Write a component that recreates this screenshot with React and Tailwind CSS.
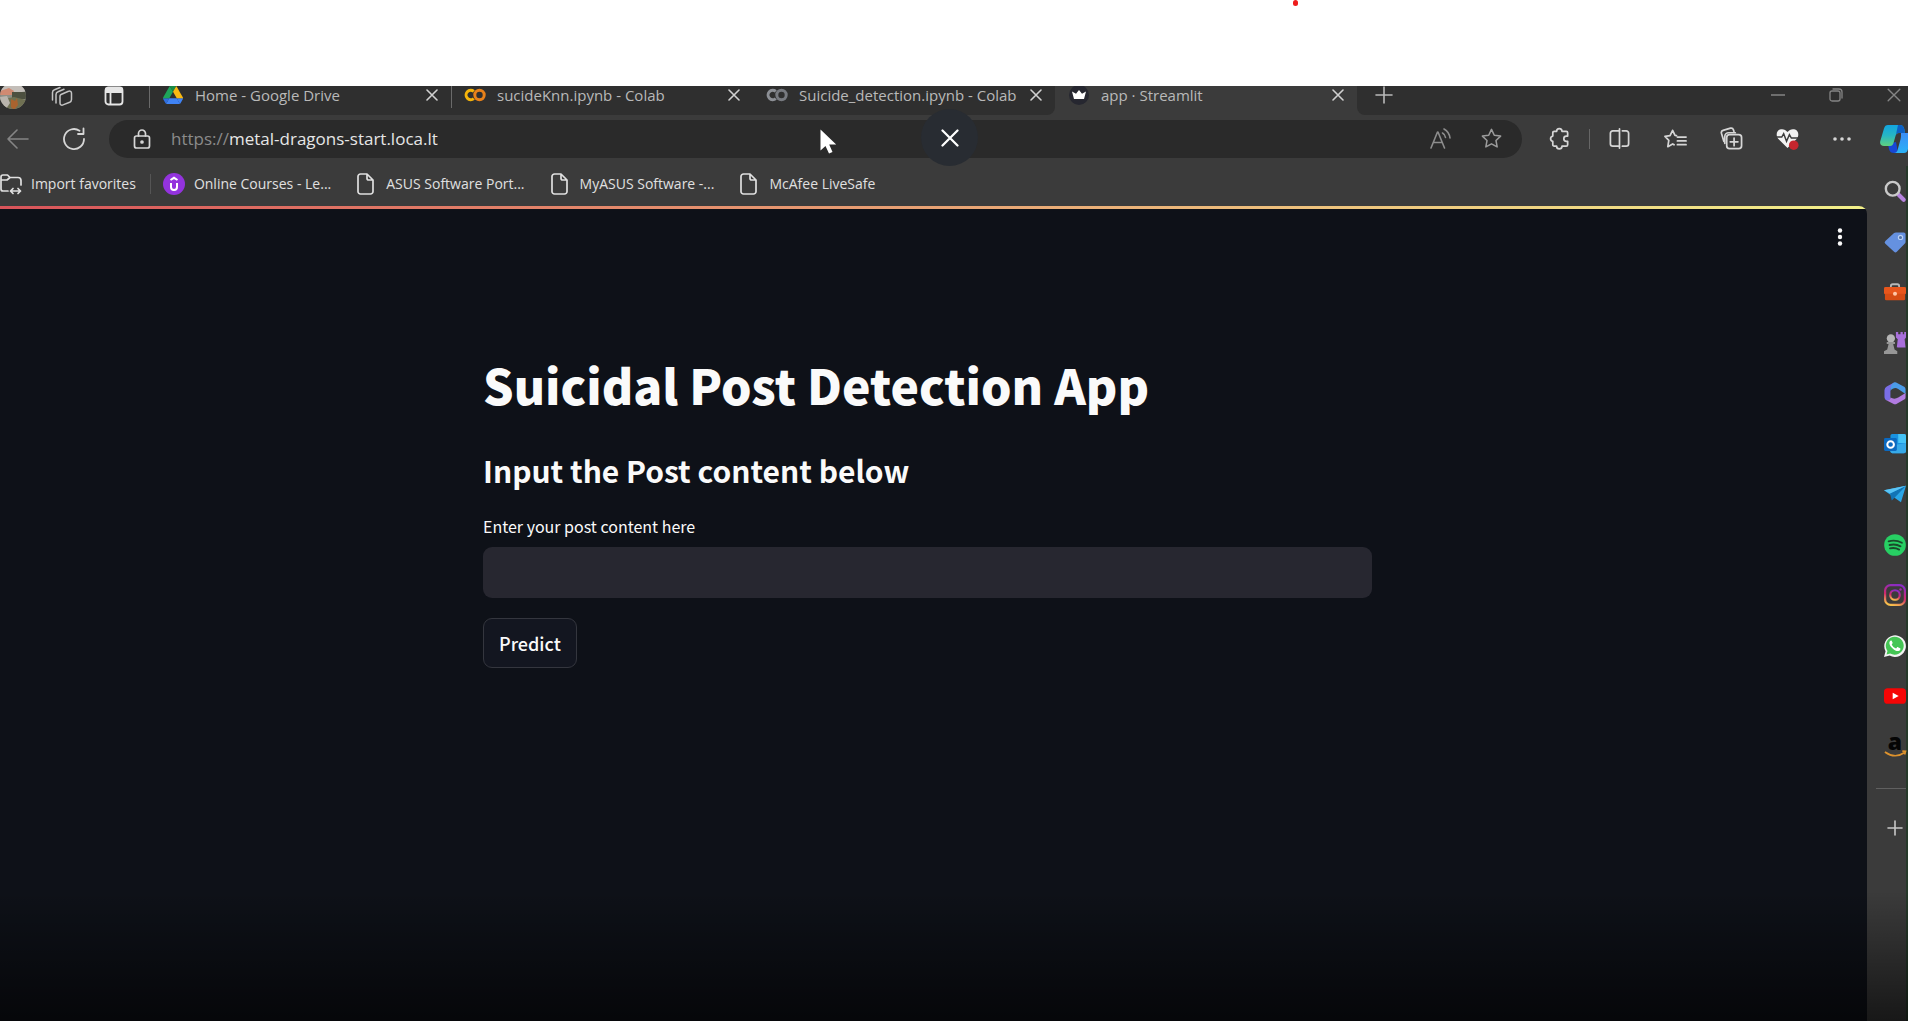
const Svg = ({ s = 22, vb = "0 0 24 24", children, className = "", sw = 1.6 }) => (
  <svg width={s} height={s} viewBox={vb} fill="none" stroke="currentColor" strokeWidth={sw} strokeLinecap="round" strokeLinejoin="round" className={"shrink-0 " + className} aria-hidden="true">
    {children}
  </svg>
);

const CloseIcon = ({ s = 12, sw = 1.6 }) => (
  <Svg s={s} vb="0 0 12 12" sw={sw}><path d="M1 1l10 10M11 1L1 11" /></Svg>
);

const Avatar = () => (
  <svg width="28" height="28" viewBox="0 0 28 28" className="shrink-0" aria-hidden="true">
    <defs><clipPath id="av"><circle cx="13" cy="14" r="13" /></clipPath></defs>
    <g clipPath="url(#av)">
      <rect width="28" height="28" fill="#8f8f86" />
      <path d="M0 0h28v9l-12 2L0 9z" fill="#c3beb9" />
      <path d="M0 9l9-3 5 3-2 4H0z" fill="#d08a72" />
      <path d="M12 10h14v7H12z" fill="#4d5040" />
      <path d="M4 17l10-2 12 3v10H3z" fill="#6f7052" />
      <path d="M0 15l7-1 3 7-4 6-6-2z" fill="#b9b4ad" />
      <path d="M11 17l4 2 2-3 1 7-4 5-3-3z" fill="#a9632f" />
    </g>
  </svg>
);

const Workspaces = () => (
  <Svg s={24} sw={1.5}>
    <path d="M2.5 16V8.500a3 3 0 0 1 2-2.800L10 3.500M6 19V10.500a3 3 0 0 1 2-2.800L14 5.200" />
    <path d="M11 10.500l7.500-3.200a2 2 0 0 1 3 1.900v6.300a3 3 0 0 1-1.800 2.700l-6.700 2.700a2 2 0 0 1-3-1.900v-6.500a2 2 0 0 1 1-2z" />
  </Svg>
);

const TabActions = () => (
  <Svg s={20} vb="0 0 20 20" sw={1.8}>
    <rect x="1.500" y="1.500" width="17" height="17" rx="3" />
    <path d="M2 2.500h16V6H2z" fill="currentColor" />
    <path d="M6.500 6v12" />
  </Svg>
);

const Drive = () => (
  <svg width="20" height="18" viewBox="0 0 87 78" className="shrink-0" aria-hidden="true">
    <path d="M6.600 66.850l3.850 6.650c.8 1.400 1.950 2.500 3.300 3.300L27.500 53H0c0 1.550.4 3.100 1.200 4.500z" fill="#2f6fe0" />
    <path d="M43.650 25L29.900 1.200c-1.350.8-2.500 1.900-3.300 3.300L1.200 48.500A9 9 0 0 0 0 53h27.500z" fill="#1ea55a" />
    <path d="M73.550 76.800c1.350-.8 2.500-1.900 3.300-3.300l9.250-16c.8-1.400 1.200-2.950 1.200-4.500H59.800l5.850 11.500z" fill="#3f83f5" />
    <path d="M43.650 25L57.400 1.200C56.050.4 54.500 0 52.900 0H34.400c-1.600 0-3.150.45-4.500 1.200z" fill="#188a45" />
    <path d="M59.800 53H27.500L13.750 76.800c1.350.8 2.900 1.200 4.500 1.200h50.800c1.600 0 3.150-.45 4.500-1.200z" fill="#3f83f5" />
    <path d="M73.400 26.500L60.700 4.500c-.8-1.400-1.950-2.500-3.300-3.300L43.650 25 59.800 53h27.450c0-1.550-.4-3.100-1.200-4.500z" fill="#f9b912" />
  </svg>
);

const Colab = ({ left, right }) => (
  <svg width="22" height="14" viewBox="0 0 22 14" fill="none" strokeWidth="3" className="shrink-0" aria-hidden="true">
    <path d="M9.800 10.600A4.700 4.700 0 1 1 9.800 3.400" stroke={left} />
    <circle cx="15.500" cy="7" r="4.700" stroke={right} />
  </svg>
);

const Crown = () => (
  <svg width="20" height="20" viewBox="0 0 20 20" className="shrink-0" aria-hidden="true">
    <circle cx="10" cy="10" r="10" fill="#262730" />
    <path d="M3 6.500l4 2.200 3-3.700 3 3.700 4-2.200-2 7.500H5z" fill="#fff" />
  </svg>
);

const tabs = [
  { title: "Home - Google Drive", icon: <Drive /> },
  { title: "sucideKnn.ipynb - Colab", icon: <Colab left="#f5b40a" right="#e8811a" /> },
  { title: "Suicide_detection.ipynb - Colab", icon: <Colab left="#8d9096" right="#777a80" /> },
  { title: "app · Streamlit", icon: <Crown />, active: true },
];

const TabStrip = () => (
  <div className="flex h-[29px] overflow-hidden bg-[#3b3b3b] text-[#b9b9b9]">
    <div className="flex w-[149px] shrink-0 items-center bg-[#2f2f2f] pb-[10px] text-[#c4c4c4]">
      <button aria-label="Profile"><Avatar /></button>
      <button aria-label="Workspaces" className="ml-[22px]"><Workspaces /></button>
      <button aria-label="Tab actions" className="ml-[30px] text-[#e6e6e6]"><TabActions /></button>
    </div>
    {tabs.map((t, i) => (
      <div key={t.title} className={"w-[302px] shrink-0 " + (t.active ? "bg-[#3b3b3b]" : i === 2 ? "rounded-br-lg bg-[#2f2f2f]" : "bg-[#2f2f2f]")}>
        <div className="flex h-[17px] items-center">
          <span className={"h-[26px] w-px shrink-0 " + (i === 0 || i === 1 ? "bg-[#6a6a6a]" : "bg-transparent")} />
          <span className="ml-3 flex w-[22px] shrink-0 justify-center">{t.icon}</span>
          <span className="ml-[11px] grow text-[15px] leading-4 whitespace-nowrap">{t.title}</span>
          <button aria-label={"Close " + t.title} className="mr-[13px] text-[#d0d0d0]"><CloseIcon /></button>
        </div>
      </div>
    ))}
    <div className="flex grow items-center rounded-bl-lg bg-[#2f2f2f] pb-3">
      <button aria-label="New tab" className="ml-[18px]"><Svg s={18} vb="0 0 18 18"><path d="M9 1v16M1 9h16" /></Svg></button>
      <div className="ml-auto flex items-center gap-[44px] pr-[7px] text-[#858585]">
        <button aria-label="Minimize"><Svg s={14} vb="0 0 14 14" sw={1.300}><path d="M0 7h14" /></Svg></button>
        <button aria-label="Restore"><Svg s={14} vb="0 0 14 14" sw={1.300}><rect x="1" y="3" width="10" height="10" rx="2" /><path d="M4 1h6a3 3 0 0 1 3 3v6" /></Svg></button>
        <button aria-label="Close window"><CloseIcon s={14} sw={1.200} /></button>
      </div>
    </div>
  </div>
);

const starPath = "M12 2.500l2.900 6.100 6.600.9-4.800 4.600 1.200 6.700-5.900-3.200-5.900 3.200 1.200-6.700L2.500 9.500l6.600-.9z";

const Copilot = () => (
  <svg width="28" height="28" viewBox="0 0 28 28" className="shrink-0" aria-hidden="true">
    <defs>
      <linearGradient id="cpA" x1="0" y1="0" x2="0" y2="1"><stop offset="0" stopColor="#12a5e0" /><stop offset=".5" stopColor="#27b6c4" /><stop offset="1" stopColor="#5fd07e" /></linearGradient>
      <linearGradient id="cpB" x1="0" y1="0" x2="0" y2="1"><stop offset="0" stopColor="#3c8df5" /><stop offset="1" stopColor="#2bb2f7" /></linearGradient>
    </defs>
    <path d="M8 19l8-2 2 11h-4c-3 0-4-1-5-4z" fill="#1747d6" />
    <path d="M8 0h12c3 0 4 2 4.500 5l.5 3h-6c-2 0-3 1-3.500 3l-2 7c-.6 2-1.500 3-3.500 3H4c-3 0-4.500-2-3.700-5L4 3.500C4.700 1 6 0 8 0z" fill="url(#cpA)" />
    <path d="M18 0h2c3 0 4 2 4.500 5l.5 3h-6c-1.500 0-2.300.6-3 1.600z" fill="#0d5fc4" />
    <path d="M21 8h6c3 0 4 2 4 5l-3 11c-.8 3-2 4-4 4H14c2 0 3-1 3.600-3l3-11c.5-2 .4-4 .4-6z" fill="url(#cpB)" />
  </svg>
);

const Toolbar = () => (
  <div className="flex h-[51px] items-center bg-[#3b3b3b] pb-1 text-[#d6d6d6]">
    <button aria-label="Back" className="ml-[7px] text-[#858585]"><Svg s={22} vb="0 0 22 22"><path d="M21 11H1M10 2l-9 9 9 9" /></Svg></button>
    <button aria-label="Refresh" className="ml-[33px]"><Svg s={24} sw={1.800}><path d="M22 12A10 10 0 1 1 17.500 3.700" /><path d="M21.500 1.500V7H16" /></Svg></button>
    <div className="ml-[23px] flex h-[38px] grow items-center rounded-full bg-[#2a2a2a] pr-[19px] pl-[23px]">
      <Svg s={20} vb="0 0 18 20" sw={1.700}><rect x="1.500" y="7" width="15" height="12" rx="2" /><path d="M5.500 7V4.500a3.500 3.500 0 0 1 7 0V7" /><circle cx="9" cy="13" r="1" fill="currentColor" /></Svg>
      <label className="relative ml-[19px] h-[24px] grow text-[17px] leading-[24px]">
        <span className="pointer-events-none absolute inset-0 whitespace-nowrap text-[#e6e6e6]"><span className="text-[#8b8b8b]">https://</span>metal-dragons-start.loca.lt</span>
        <input aria-label="Address" className="h-full w-full bg-transparent outline-none" />
      </label>
      <button aria-label="Read aloud" className="text-[#8d8d8d]"><Svg s={22} vb="0 0 22 22"><path d="M1 20L7.500 4h.5L14.500 20M3.500 14.500h8.500M12.500 5c1.800 1 2.700 2.500 3 4.500M14 1c3.500 2 5.500 5 6 9" /></Svg></button>
      <button aria-label="Add to favorites" className="ml-7 text-[#9b9b9b]"><Svg s={23}><path d={starPath} /></Svg></button>
    </div>
    <button aria-label="Extensions" className="ml-[26px]"><Svg s={23} sw={1.800}><path d="M9 4.500a2.800 2.800 0 0 1 5.600 0H19a1.500 1.500 0 0 1 1.500 1.500v3.500h-1.300a2.700 2.700 0 0 0 0 5.400h1.300v3.600A1.500 1.500 0 0 1 19 20h-4.400a2.800 2.800 0 0 1-5.600 0H6.500A1.500 1.500 0 0 1 5 18.500V15a2.800 2.800 0 0 1 0-5.500V6a1.500 1.500 0 0 1 1.500-1.500z" /></Svg></button>
    <span className="mx-[18px] h-[20px] w-px bg-[#666]" />
    <button aria-label="Split screen"><Svg s={23} sw={1.800}><path d="M9 4H5a2.500 2.500 0 0 0-2.500 2.500v11A2.500 2.500 0 0 0 5 20h4M15 4h4a2.500 2.500 0 0 1 2.500 2.500v11A2.500 2.500 0 0 1 19 20h-4M12 2v20M9 4h3M9 20h3" /></Svg></button>
    <button aria-label="Favorites" className="ml-[33px]"><Svg s={23} sw={1.800}><path d="M13 8l-1.500-.2L9 2.500 6.300 8l-5.300.8 4 4.100-1 6.600 5-2.800 1.500.9M14 9.500h9M14 13.500h9M14 17.500h9" transform="translate(0 1)" /></Svg></button>
    <button aria-label="Collections" className="ml-[33px]"><Svg s={23} sw={1.800}><rect x="7" y="8" width="15.500" height="14.500" rx="3" /><path d="M14.700 11.500v8M10.700 15.500h8M4 15L1.500 6.500a2.500 2.500 0 0 1 1.700-3L11 1.200a2.500 2.500 0 0 1 3 1.600l.5 1.700M5 17v-7a4 4 0 0 1 4-4h7" /></Svg></button>
    <button aria-label="Browser essentials" className="ml-[33px]">
      <svg width="23" height="23" viewBox="0 0 24 24" aria-hidden="true">
        <path d="M12 22L2.500 12.500C-.5 9 .5 4 4 2.700c3-1.200 6 0 8 2.600 2-2.600 5-3.800 8-2.600 3.500 1.300 4.500 6.300 1.500 9.800z" fill="#f2f2f2" />
        <path d="M1 10.500h5l2-3.500 3 8 3-7 2 3.500h7" fill="none" stroke="#3b3b3b" strokeWidth="1.500" />
        <circle cx="18.500" cy="19" r="5" fill="#c6262e" />
      </svg>
    </button>
    <button aria-label="Settings and more" className="ml-[34px]"><Svg s={18} vb="0 0 18 18"><g fill="currentColor" stroke="none"><circle cx="2" cy="9" r="1.800" /><circle cx="9" cy="9" r="1.800" /><circle cx="16" cy="9" r="1.800" /></g></Svg></button>
    <button aria-label="Copilot" className="ml-[29px]"><Copilot /></button>
  </div>
);

const FileIcon = () => (
  <Svg s={22} vb="0 0 22 22" sw={1.700}><path d="M5.500 1H12l6 6v11.500A2.500 2.500 0 0 1 15.500 21h-10A2.500 2.500 0 0 1 3 18.500v-15A2.500 2.500 0 0 1 5.500 1zM12 1v4.500A1.500 1.500 0 0 0 13.500 7H18" /></Svg>
);

const Bookmarks = () => (
  <nav aria-label="Favorites bar" className="flex h-[40px] items-center bg-[#3b3b3b] pb-[5px] text-[14px] leading-[20px] whitespace-nowrap text-[#e0e0e0]">
    <a href="#import" className="flex items-center gap-[9px]">
      <Svg s={22} vb="0 0 22 22" sw={1.700}><path d="M8 18H3a2 2 0 0 1-2-2V4a2 2 0 0 1 2-2h4.500L10 4.500h8a3 3 0 0 1 3 3V12M1 7h6l3-2.500M10.500 18h10M13 15.500L10.500 18l2.500 2.500M18 15.500l2.500 2.500-2.500 2.500" /></Svg>
      Import favorites
    </a>
    <span className="mr-3 ml-[14px] h-[20px] w-px bg-[#555]" />
    <a href="#courses" className="flex items-center gap-[9px]">
      <svg width="22" height="22" viewBox="0 0 22 22" aria-hidden="true"><circle cx="11" cy="11" r="11" fill="#9333dd" /><path d="M8 10v4a3 3 0 0 0 6 0v-4M7.500 7L11 4.800 14.500 7" fill="none" stroke="#fff" strokeWidth="2" /></svg>
      Online Courses - Le...
    </a>
    <a href="#asus" className="ml-6 flex items-center gap-[9px]"><FileIcon />ASUS Software Port...</a>
    <a href="#myasus" className="ml-6 flex items-center gap-[9px]"><FileIcon />MyASUS Software -...</a>
    <a href="#mcafee" className="ml-6 flex items-center gap-[9px]"><FileIcon />McAfee LiveSafe</a>
  </nav>
);

const Pic = ({ children }) => <svg width="22" height="22" viewBox="0 0 24 24" className="block overflow-visible" aria-hidden="true">{children}</svg>;

const sideItems = [
  ["Search", <Pic><path d="M16 16l5.500 5.500" stroke="#b583dd" strokeWidth="4.500" strokeLinecap="round" /><circle cx="9.500" cy="9.500" r="7.500" fill="none" stroke="#c9c9c9" strokeWidth="2.600" /></Pic>],
  ["Shopping", <Pic><path d="M13 1.500h8.500A2 2 0 0 1 23.500 3.500V12a3 3 0 0 1-1 2l-8.500 8.500a2 2 0 0 1-3 0L1.500 14a2 2 0 0 1 0-3L11 2.300a3 3 0 0 1 2-.8z" fill="#6591e0" /><circle cx="18" cy="7" r="2.300" fill="#5273a8" stroke="#b9d0f5" strokeWidth="1.300" /></Pic>],
  ["Tools", <Pic><path d="M7.500 7V5.500a2 2 0 0 1 2-2h5a2 2 0 0 1 2 2V7" fill="none" stroke="#b8b8b8" strokeWidth="2" /><rect x="0" y="6.500" width="24" height="8" rx="1.500" fill="#e8561c" /><path d="M1 14h22v5.500a1.500 1.500 0 0 1-1.500 1.500h-19A1.500 1.500 0 0 1 1 19.500z" fill="#d64c14" /><circle cx="12" cy="14" r="2.200" fill="#ffc7a8" /></Pic>],
  ["Games", <Pic><path d="M13 0h2.500v2.500H18V0h2.500v2.500H22V0h2v6l-1.500 2 1 9h-8l-1.500-.5 1-8.500-2-2z" fill="#a86fdb" /><circle cx="7.500" cy="7" r="4.500" fill="#b5b5b5" /><path d="M3 11h9v2h-2l1.500 6 3 2v3H0v-3l3.500-2L5 13H3z" fill="#969696" /></Pic>],
  ["Microsoft 365", <Pic><path d="M12 0L3 5A5 5 0 0 0 .500 9v7c0 2 1 3.500 2.500 4 2 .8 4-.5 4-2.500V10c0-4 2-6 5-10z" fill="#7a6ee6" /><path d="M10 1c1.300-.9 3-.9 4.300 0L22 5.300c1 .7 1.500 1.700 1.500 3V13l-8-5.500c-3-2-6-1-8.500 2C7 5 8 2.500 10 1z" fill="#4b9be8" /><path d="M2 19.500c2.500 1.200 5 .2 5-2.500 3 1.800 6 1.500 8.500 0l8-5v4.500c0 1.200-.6 2-1.500 2.600l-8 4.600c-1.300.8-2.700.8-4 0z" fill="#b17be0" /></Pic>],
  ["Outlook", <Pic><rect x="7" y="1" width="17" height="21" rx="2" fill="#1992e0" /><path d="M15.500 1H22a2 2 0 0 1 2 2v8h-8.500z" fill="#45c3f5" /><path d="M7 14l17-3v9a2 2 0 0 1-2 2H9a2 2 0 0 1-2-2z" fill="#36a9e8" /><rect x="0" y="5.500" width="14" height="14" rx="1.500" fill="#0b69c0" /><circle cx="7.200" cy="12.500" r="3.600" fill="none" stroke="#fff" strokeWidth="2.200" /></Pic>],
  ["Telegram", <Pic><path d="M0 8L24 3l-5.500 18-7-5z" fill="#2aa6e6" /><path d="M6.500 11.500L24 3 11.500 16l-3 3z" fill="#1274b5" /><path d="M0 8L24 3 6.500 11.500z" fill="#5ac4f5" /></Pic>],
  ["Spotify", <Pic><circle cx="12" cy="12" r="11.800" fill="#27cf63" /><path d="M5 8c5-1.300 10-.8 14.500 1.500M6 12c4-1 8.500-.6 12 1.500M6.500 15.700c3.500-.8 7-.4 10 1.300" fill="none" stroke="#1a4a2b" strokeWidth="2" strokeLinecap="round" /></Pic>],
  ["Instagram", <Pic><defs><linearGradient id="ig" x1=".6" y1="0" x2=".3" y2="1"><stop offset="0" stopColor="#8a2cc4" /><stop offset=".55" stopColor="#cf2a6c" /><stop offset="1" stopColor="#f7c04a" /></linearGradient></defs><g fill="none" stroke="url(#ig)" strokeWidth="2.400"><rect x="1.200" y="1.200" width="21.600" height="21.600" rx="6" /><circle cx="12" cy="12" r="5.200" /></g><circle cx="18" cy="6" r="1.300" fill="#a52bb0" /></Pic>],
  ["WhatsApp", <Pic><path d="M0 24l1.700-6.200A11.800 11.800 0 1 1 6.200 22.400z" fill="#f3f3f3" /><path d="M2.800 21.200l1-3.700a9.800 9.800 0 1 1 3 2.700z" fill="#45c655" /><path d="M8.500 6.500c-.5-.7-1.300-.6-1.900.1-2 2.500.4 6 3.100 8.400 2.800 2.400 6.300 3.700 8 1 .5-.8.300-1.300-.2-1.600l-2.200-1.100c-.5-.3-.9-.1-1.200.3l-.9 1c-2.300-.8-3.800-2.200-4.800-4.300l.9-1.200c.2-.3.200-.6 0-1z" fill="#fff" /></Pic>],
  ["YouTube", <Pic><rect x="0" y="3.500" width="24" height="17" rx="4" fill="#f50505" /><path d="M9.500 8.500l6.500 3.500-6.500 3.500z" fill="#fff" /></Pic>],
  ["Amazon", <Pic><text x="12" y="15" textAnchor="middle" fontFamily="Open Sans, sans-serif" fontWeight="800" fontSize="25" fill="#050505">a</text><path d="M1 17.500c7 5 15 5 21.500.5M20 16.500l3.500.2-1 3.500" fill="none" stroke="#dd922d" strokeWidth="1.800" /></Pic>],
];

const Sidebar = () => (
  <aside className="flex w-[41px] shrink-0 flex-col items-end border-r-2 border-[#26392a] bg-[#3b3b3b] pt-[14px]">
    <div className="flex h-[578px] flex-col justify-between">
      {sideItems.map(([name, icon]) => (
        <button key={name} aria-label={name} className="block">{icon}</button>
      ))}
    </div>
    <span className="mt-[30px] h-px w-[30px] bg-[#606060]" />
    <button aria-label="Customize" className="mt-[31px] mr-[3px] text-[#c8c8c8]"><Svg s={16} vb="0 0 16 16"><path d="M8 1v14M1 8h14" /></Svg></button>
  </aside>
);

const StreamlitPage = () => (
  <main className="flex grow flex-col overflow-hidden rounded-tr-lg bg-[#0e1118] font-['Noto_Sans_CJK_SC','Noto_Sans',sans-serif] text-[#fafafa]">
    <div className="h-[3px] bg-linear-to-r from-[#d9545a] via-[#e8a274] to-[#f2f08a]" />
    <div className="flex justify-end pt-[18px] pr-[17px]">
      <button aria-label="Main menu"><Svg s={20} vb="0 0 20 20"><g fill="currentColor" stroke="none"><circle cx="10" cy="3.500" r="2.200" /><circle cx="10" cy="10" r="2.200" /><circle cx="10" cy="16.500" r="2.200" /></g></Svg></button>
    </div>
    <div className="w-full pt-[105px] pr-[12px]">
      <div className="mx-auto flex w-full max-w-[889px] flex-col items-start">
        <h1 className="text-[48px] leading-[64px] font-black">Suicidal Post Detection App</h1>
        <h2 className="mt-[34px] text-[30px] leading-[40px] font-semibold">Input the Post content below</h2>
        <label htmlFor="post" className="mt-[24px] text-[16px] leading-[24px]">Enter your post content here</label>
        <input id="post" className="mt-[9px] h-[51px] w-full rounded-[9px] bg-[#272730] px-4 outline-none" />
        <button className="mt-5 h-[50px] rounded-[9px] border border-[#34363e] bg-[#131620] px-[15px] text-[18px] leading-[24px] font-medium">Predict</button>
      </div>
    </div>
  </main>
);

export default function App() {
  return (
    <div className="relative flex min-h-screen flex-col overflow-hidden bg-white font-['Open_Sans','Noto_Sans',sans-serif]">
      <div className="h-[86px]">
        <span className="absolute top-0 left-[1293px] h-[6px] w-[5px] rounded-full bg-[#ee1c1c]" />
      </div>
      <div className="flex grow flex-col bg-[#3b3b3b]">
        <TabStrip />
        <Toolbar />
        <div className="flex grow">
          <div className="flex grow flex-col">
            <Bookmarks />
            <StreamlitPage />
          </div>
          <Sidebar />
        </div>
      </div>
      <div className="pointer-events-none absolute inset-x-0 bottom-0 h-[130px] bg-linear-to-b from-transparent to-black/60" />
      <button aria-label="Close preview" className="absolute top-[109px] left-[921px] flex size-[57px] items-center justify-center rounded-full bg-[#282c32] text-white"><CloseIcon s={18} sw={1.500} /></button>
      <svg width="18" height="26" viewBox="0 0 18 26" className="absolute top-[129px] left-[820px]" aria-hidden="true"><path d="M.5.500v21l5-4.500 3.500 7.500 3.500-1.500-3.300-7.500h7z" fill="#fff" /></svg>
    </div>
  );
}
